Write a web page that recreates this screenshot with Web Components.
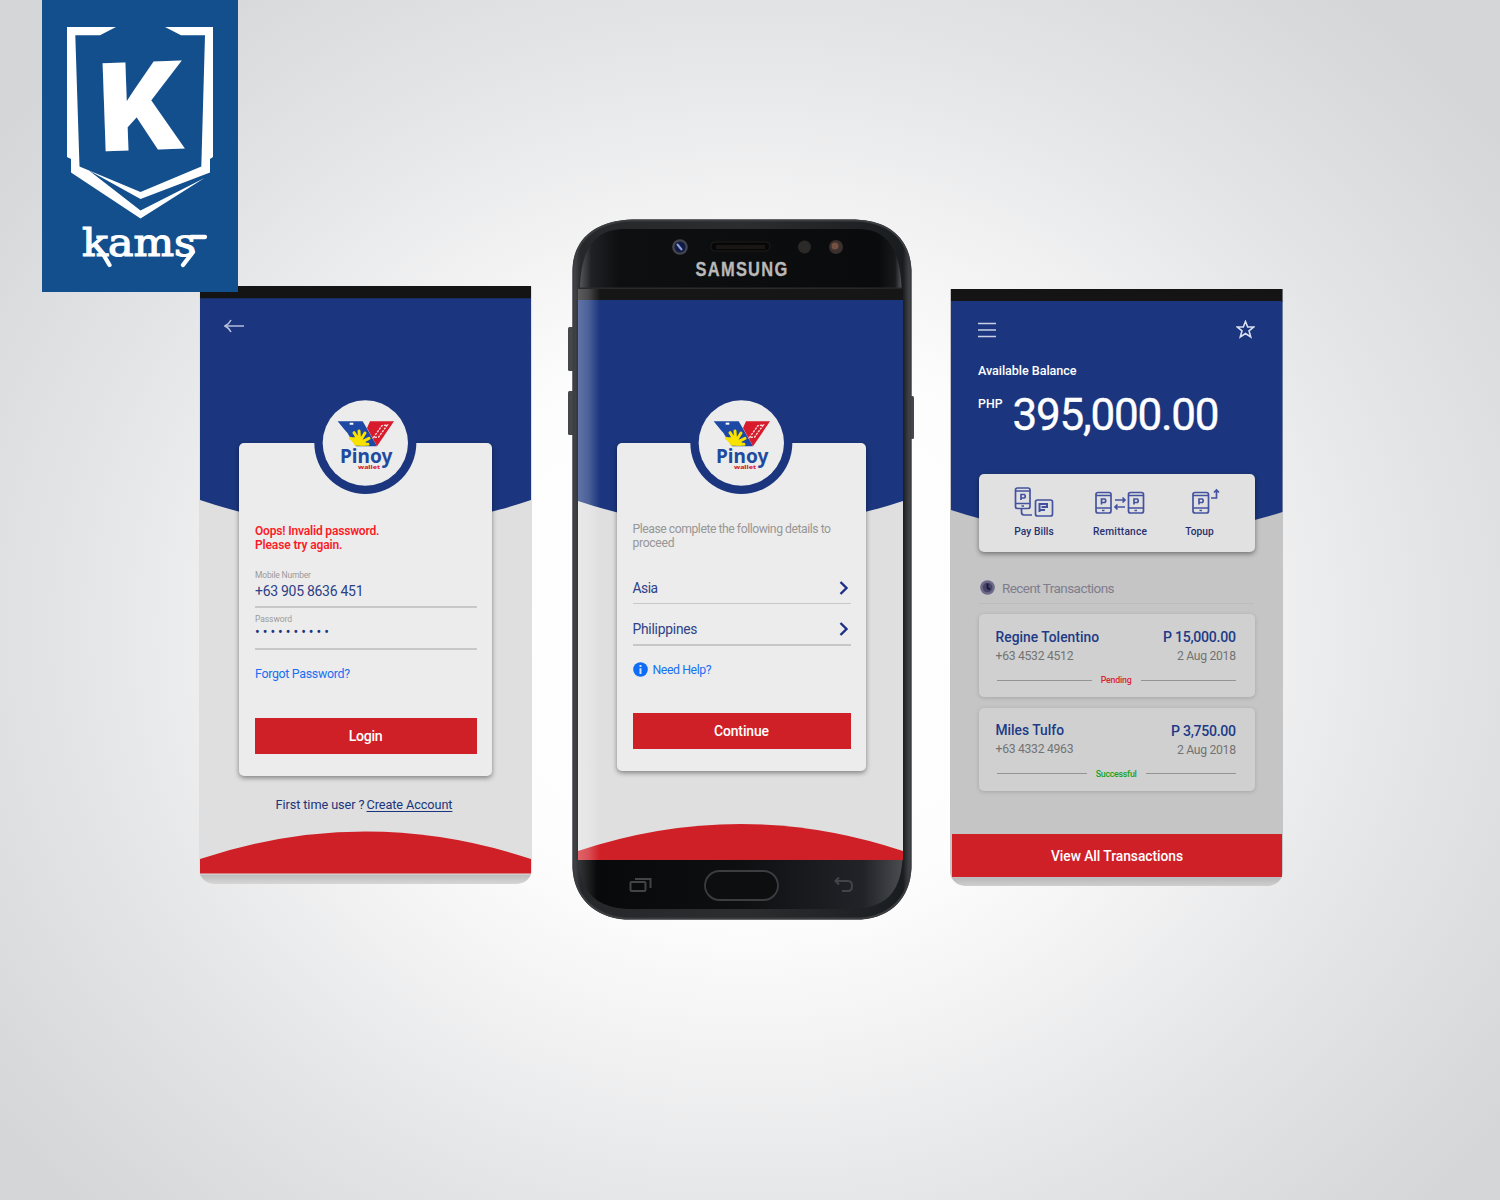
<!DOCTYPE html>
<html lang="en">
<head>
<meta charset="utf-8">
<title>Pinoy Wallet</title>
<style>
  html, body { margin: 0; padding: 0; }
  body { width: 1500px; height: 1200px; overflow: hidden; font-family: Roboto, "Liberation Sans", sans-serif; }
</style>
</head>
<body>
<wallet-showcase></wallet-showcase>
<script>
const define = (name, html, connected) => {
  const tpl = document.createElement('template');
  tpl.innerHTML = html;
  customElements.define(name, class extends HTMLElement {
    connectedCallback() {
      if (this.shadowRoot) return;
      this.attachShadow({ mode: 'open' }).append(tpl.content.cloneNode(true));
      if (connected) connected.call(this, this.shadowRoot);
    }
  });
};

/* One line of text: s = size, h = line height, t = space above, w = tracked width */
define('text-line', `
<style>
  :host { display: block; white-space: nowrap; flex: none; }
  span { display: inline-block; }
  :host([underline]) span { text-decoration: underline 1px; text-underline-offset: 1.500px; }
</style><span><slot></slot></span>`, function (root) {
  const a = n => parseFloat(this.getAttribute(n));
  this.style.fontSize = a('s') + 'px';
  this.style.lineHeight = a('h') + 'px';
  this.style.height = a('h') + 'px';
  if (a('t')) this.style.marginTop = a('t') + 'px';
  const w = a('w'), span = root.querySelector('span');
  if (w) {
    const gap = (w - span.getBoundingClientRect().width) / (this.textContent.length - 1);
    span.style.letterSpacing = gap + 'px';
    span.style.marginRight = -gap + 'px';
  }
});

define('kams-badge', `
<style>
  :host { display: block; width: 196px; height: 292px; background: #134f8d; }
  svg { display: block; }
</style>
<svg width="196" height="292" viewBox="42 0 196 292" fill="#fff">
  <path d="M67 27H116L100 35.300H75.300L79.500 166.500L140.500 192L201.300 166.500L205 35.300H181L165 27H213V157L210 159V172.500L140.500 199L89 170.500L140.500 210.500L204.500 178L140.500 218.500L71 172.500V159L67 157Z"/>
  <text x="97" y="150" font-family="Roboto" font-weight="900" font-size="124" textLength="85" lengthAdjust="spacingAndGlyphs" transform="rotate(-2 140 105)">K</text>
  <text x="82" y="256" font-family="DejaVu Serif" font-size="39" stroke="#fff" stroke-width="1.200" textLength="114" lengthAdjust="spacingAndGlyphs">kams</text>
  <path d="M103 254L109.500 265M191 237H205M193 252L183 265" stroke="#fff" stroke-width="4.300" stroke-linecap="round" fill="none"/>
</svg>`);

define('wallet-logo', `
<style>:host { display: block; height: 105px; } svg { display: block; }</style>
<svg width="110" height="105" viewBox="0 0 330 315">
  <circle cx="166" cy="144" r="153" fill="#1b367e"/>
  <circle cx="166" cy="144" r="128" fill="#ececec"/>
  <path d="M83 79H158L172 103L201 154H138L119 125Q114 114 105 106Z" fill="#1d48a4"/>
  <path d="M180 79H252L201 154L171 99Z" fill="#d71a2c"/>
  <path d="M190 128L216 92L232 90L206 126Z" fill="none" stroke="#f6dcdc" stroke-width="4" stroke-dasharray="7 3"/>
  <path d="M119 86H130" stroke="#fff" stroke-width="6"/>
  <path d="M118 128L138 126L168 140L166 152H136Z" fill="#f9e100"/>
  <path d="M148 138L132 113M149 138L147 108M150 138L165 114M152 142L177 130M152 147L174 148M148 142L121 130" stroke="#f9e100" stroke-width="9" stroke-linecap="round"/>
  <text x="90" y="205" font-family="Noto Sans" font-weight="700" font-size="58" fill="#214a9f" textLength="157" lengthAdjust="spacingAndGlyphs">Pinoy</text>
  <text x="144" y="221" font-family="Noto Sans" font-weight="800" font-size="17" fill="#d5202e" textLength="66" lengthAdjust="spacingAndGlyphs">wallet</text>
</svg>`);

define('app-card', `
<style>
  :host { display: flex; flex-direction: column; box-sizing: border-box; flex: none; background: #ececec; border-radius: 5px; box-shadow: 0 2px 5px rgba(0,0,0,.42); }
</style><slot></slot>`);

define('red-button', `
<style>
  :host { display: flex; align-items: center; justify-content: center; flex: none; background: #d02027; color: #fff; font-weight: 500; }
</style><slot></slot>`);

define('text-rule', `
<style>:host { display: block; flex: none; height: 1.500px; background: #c8c8c8; }</style>`);

define('login-screen', `
<style>
  :host { display: grid; width: 333px; height: 598px; background: linear-gradient(#dfdfdf 0 588px, #bdbdbd 589px, #d6d6d6 598px); border-radius: 0 0 15px 15px; overflow: hidden; }
  svg.bg, .col { grid-area: 1/1; }
  svg { display: block; }
  .col { display: flex; flex-direction: column; color: #1b357c; min-width: 0; }
  .back { margin: 33px 0 0 25px; }
  app-card { width: 253px; height: 333px; margin: 110px 0 0 40px; padding: 0 15px 0 16px; }
  wallet-logo { margin: -48px 0 0 54.500px; width: 110px; }
  .error { color: #fa1c28; font-weight: 600; }
  .label { color: #9a9a9a; }
  .number { color: #2d4186; }
  .link { color: #176ff2; }
  .foot { display: flex; margin: 19.500px 0 0 76.500px; gap: 2px; }
</style>
<svg class="bg" width="333" height="598" viewBox="-1 0 333 598">
  <rect width="331" height="13" fill="#141414"/>
  <path d="M0 12.300H331V214Q165.500 270 0 214Z" fill="#1b367e"/>
  <path d="M0 573Q165.500 518 331 573V587.500H0Z" fill="#d02027"/>
</svg>
<div class="col">
  <svg class="back" width="21" height="14" fill="none" stroke="#b4bfdc" stroke-width="1.600"><path d="M7 1Q5 5 1 7Q5 9 7 13M1 7H20"/></svg>
  <app-card>
    <wallet-logo></wallet-logo>
    <text-line class="error" s="12" h="14.500" t="23.700" w="124.500">Oops! Invalid password.</text-line>
    <text-line class="error" s="12" h="14.500" w="87.500">Please try again.</text-line>
    <text-line class="label" s="8.500" h="12" t="16.500" w="56">Mobile Number</text-line>
    <text-line class="number" s="14" h="18" t="1" w="108.500">+63 905 8636 451</text-line>
    <text-rule style="margin-top:6px"></text-rule>
    <text-line class="label" s="8.500" h="12" t="5" w="37">Password</text-line>
    <text-line s="14" h="12" t="1.500" w="74">••••••••••</text-line>
    <text-rule style="margin-top:10px"></text-rule>
    <text-line class="link" s="12.400" h="16" t="16.500" w="95">Forgot Password?</text-line>
    <red-button style="height:36px;margin-top:36px;margin-left:-.5px"><text-line s="14.200" h="18" w="34">Login</text-line></red-button>
  </app-card>
  <div class="foot"><text-line s="12.700" h="17" w="89">First time user ?</text-line><text-line underline s="12.700" h="17" w="86">Create Account</text-line></div>
</div>`);

define('picker-row', `
<style>
  :host { display: flex; flex: none; align-items: center; justify-content: space-between; height: 18px; color: #2d4186; }
  svg { display: block; margin-right: 2px; }
</style><slot></slot>
<svg width="10" height="14" fill="none" stroke="#1c2f86" stroke-width="2.400"><path d="M1.500 1L7.500 7L1.500 13"/></svg>`);

define('region-screen', `
<style>
  :host { display: grid; width: 325px; height: 571px; background: #dfdfdf; overflow: hidden; }
  svg.bg, .col, .glare { grid-area: 1/1; }
  svg { display: block; }
  .glare { z-index: 1; background: linear-gradient(90deg, rgba(255,255,255,.3), rgba(255,255,255,.22) 10px, rgba(255,255,255,0) 22px); }
  .col { display: flex; flex-direction: column; }
  app-card { width: 249px; height: 328px; margin: 154px 0 0 39px; padding: 0 15px 0 16px; }
  wallet-logo { margin: -48px 0 0 53px; width: 110px; }
  .hint { color: #979797; }
  .help { display: flex; align-items: center; gap: 5px; margin-top: 16px; color: #1a70f2; }
</style>
<svg class="bg" width="325" height="571">
  <rect width="325" height="12" fill="#161616"/>
  <path d="M0 11H325V212Q162.500 266 0 212Z" fill="#1b367e"/>
  <path d="M0 562Q162.500 508 325 562V571H0Z" fill="#d02027"/>
</svg>
<div class="col">
  <app-card>
    <wallet-logo></wallet-logo>
    <text-line class="hint" s="12.200" h="14" t="22" w="198.500">Please complete the following details to</text-line>
    <text-line class="hint" s="12.200" h="14" w="42">proceed</text-line>
    <picker-row style="margin-top:29px"><text-line s="13.800" h="18" w="25.500">Asia</text-line></picker-row>
    <text-rule style="margin-top:5.500px"></text-rule>
    <picker-row style="margin-top:15.500px"><text-line s="13.800" h="18" w="65">Philippines</text-line></picker-row>
    <text-rule style="margin-top:6.500px"></text-rule>
    <div class="help">
      <svg width="15" height="15"><circle cx="7.500" cy="7.500" r="7.300" fill="#0f6df5"/><path d="M7.500 3V4.900M7.500 6.200V12" stroke="#cfe0fb" stroke-width="2"/></svg>
      <text-line s="12.300" h="16" w="59">Need Help?</text-line>
    </div>
    <red-button style="height:35.500px;margin-top:35.500px"><text-line s="13.900" h="18" w="55">Continue</text-line></red-button>
  </app-card>
</div>
<div class="glare"></div>`);

define('galaxy-phone', `
<style>
  :host { display: grid; width: 346px; height: 702px; }
  svg, .view { grid-area: 1/1; }
  svg { display: block; }
  .view { margin: 70px 0 0 9.500px; }
</style>
<svg width="346" height="702" viewBox="568 219 346 702">
  <defs>
    <linearGradient id="rim" x2="1" y2="0"><stop offset="0" stop-color="#4b4d52"/><stop offset=".025" stop-color="#26272a"/><stop offset=".5" stop-color="#2c2d2f"/><stop offset=".975" stop-color="#1a1d20"/><stop offset="1" stop-color="#505257"/></linearGradient>
    <linearGradient id="face" x2="1" y2="0"><stop offset="0" stop-color="#55565a"/><stop offset=".035" stop-color="#202124"/><stop offset=".12" stop-color="#0e0f11"/><stop offset=".93" stop-color="#0a0b0c"/><stop offset=".98" stop-color="#18191b"/><stop offset="1" stop-color="#55565a"/></linearGradient>
    <linearGradient id="chin" x2="1" y2="0"><stop offset="0" stop-color="#36373a"/><stop offset=".06" stop-color="#08090a"/><stop offset=".5" stop-color="#0e0f11"/><stop offset=".88" stop-color="#222328"/><stop offset="1" stop-color="#4b4c50"/></linearGradient>
  </defs>
  <g fill="#45474d"><rect x="568" y="327" width="7" height="44" rx="1.500"/><rect x="568" y="391" width="7" height="44" rx="1.500"/><rect x="908" y="396" width="6" height="43" rx="1.500"/></g>
  <path d="M572.500 270C573 238 596 221 632 219.500H855C891 221 910 240 911.500 270V868C910 898 892 917 861 919.500H625C594 917 574 898 572.500 868Z" fill="url(#rim)"/>
  <path d="M573.500 270C574 239 597 221.500 632 220.500H855C890 221.500 909 240 910.500 270V868C909 897 891 916 861 918.500H625C595 916 575 897 573.500 868Z" fill="none" stroke="#3b3d41" stroke-width="2"/>
  <path d="M580 288C581 250 594 230 622 229H860C888 230 900 250 901.500 288Z" fill="url(#face)"/>
  <path d="M580 288H902" stroke="#2b2c2e"/>
  <path d="M578 859.500H902.500C900 893 886 908 852 909H630C596 908 581 893 578 859.500Z" fill="url(#chin)"/>
  <circle cx="680" cy="247" r="7.800" fill="#44464d"/><circle cx="680" cy="247" r="5.500" fill="#121a46"/><path d="M677 244L682 250" stroke="#8f9fd8" stroke-width="2"/>
  <rect x="711" y="242" width="59" height="9" rx="4" fill="#070707" stroke="#1d1d1d"/><path d="M716 247H765" stroke="#191614" stroke-width="4"/>
  <circle cx="804.500" cy="247" r="6.500" fill="#2b2a29"/><circle cx="836" cy="247" r="7" fill="#3a302d"/><circle cx="835" cy="246" r="3.500" fill="#765040"/>
  <text x="695.500" y="276" font-family="Liberation Sans" font-weight="700" font-size="19.500" fill="#b9b9b9" stroke="#b9b9b9" stroke-width=".3" letter-spacing="1.500" textLength="93" lengthAdjust="spacingAndGlyphs">SAMSUNG</text>
  <rect x="705" y="871" width="73" height="29" rx="14.500" fill="#0d0e10" stroke="#3c3d40" stroke-width="1.800"/>
  <g fill="none" stroke="#434447" stroke-width="2"><rect x="630.500" y="882" width="15" height="9" rx="1"/><path d="M635 879H650.500V888"/><path d="M836 881H848Q852 881 852 886T848 891H842M839 877.500L835.500 881L839 884.500"/></g>
</svg>
<div class="view"><slot></slot></div>`);

define('quick-action', `
<style>
  :host { display: flex; flex-direction: column; align-items: center; color: #27306f; font-weight: 500; }
</style><slot name="icon"></slot><slot></slot>`);

define('transaction-card', `
<style>
  :host { display: flex; flex-direction: column; box-sizing: border-box; flex: none; width: 275.500px; height: 83px; padding: 13.500px 18.500px 0 16.500px; border-radius: 5px; background: #d0d0d0; box-shadow: 0 1px 4px rgba(0,0,0,.16); }
  .row { display: flex; justify-content: space-between; }
  .top { color: #203a86; font-weight: 500; }
  .sub { color: #737373; margin-top: 2.500px; }
  .state { display: flex; align-items: center; gap: 9px; margin-top: 10px; padding-left: 1px; font-weight: 500; }
  .state i { height: 1px; background: #949494; flex: 1; }
</style>
<div class="row top"><slot name="name"></slot><slot name="amount"></slot></div>
<div class="row sub"><slot name="phone"></slot><slot name="date"></slot></div>
<div class="state"><i></i><slot name="state"></slot><i></i></div>`);

define('home-screen', `
<style>
  :host { display: grid; width: 333px; height: 597.500px; border-radius: 0 0 15px 15px; overflow: hidden; background: linear-gradient(#c5c5c5 0 588px, #b9b9b9 589px, #cfcfcf 597px); }
  svg.bg, .col { grid-area: 1/1; }
  svg { display: block; }
  .col { display: flex; flex-direction: column; }
  .bar { display: flex; justify-content: space-between; margin: 31px 28.500px 0 28px; height: 20px; align-items: center; }
  .balance { color: #fff; margin-left: 28px; }
  .sum { display: flex; align-items: flex-start; gap: 10px; margin-top: 11px; }
  .actions { display: flex; flex-direction: row; width: 275.500px; height: 78px; margin: 34px 0 0 29px; background: #e1e1e1; padding: 11px 0 0 30px; }
  .recent { display: flex; align-items: center; gap: 7px; margin: 27px 0 0 30px; color: #807d8d; }
  .line { height: 1px; background: #bcbcbc; margin: 6px 29px 0; }
  transaction-card { margin-left: 29px; }
  [slot=state] { font-weight: 500; }
  red-button { height: 43px; margin: 43.500px 1px 0 2px; }
</style>
<svg class="bg" width="333" height="598" viewBox="-1 0 333 598">
  <rect width="331.500" height="13" fill="#141414"/>
  <path d="M0 12H331.500V223Q165 275 0 221Z" fill="#1b367e"/>
</svg>
<div class="col">
  <div class="bar">
    <svg width="18" height="16" stroke="#c9d0e5" stroke-width="1.700"><path d="M0 1.500H18M0 8H18M0 14.500H18"/></svg>
    <svg width="19" height="19" viewBox="0 0 19 19" fill="none" stroke="#d9dfee" stroke-width="1.600"><path d="M9.500 1.500L11.700 7H17.600L13 10.800L14.700 17L9.500 13.500L4.300 17L6 10.800L1.400 7H7.300Z"/></svg>
  </div>
  <div class="balance">
    <text-line style="font-weight:500" s="12.600" h="16" t="23" w="98.500">Available Balance</text-line>
    <div class="sum"><text-line style="font-weight:500" s="12.300" h="14" t="7" w="24.500">PHP</text-line><text-line style="-webkit-text-stroke:.4px #fff" s="44" h="50" w="207">395,000.00</text-line></div>
  </div>
  <app-card class="actions">
    <quick-action style="width:50px">
      <svg slot="icon" width="40" height="39" viewBox="0 0 40 39" fill="none" stroke="#4453a0" stroke-width="1.700"><rect x="1.500" y="3" width="14.500" height="20.500" rx="2"/><path d="M1.500 6H16M1.500 18.500H16M7.500 21H10M7 15V9.500H10.500Q12 11.200 10.500 13H7M7.500 24V27Q7.500 30 10 30H18"/><rect x="21.500" y="15" width="17" height="16" rx="2"/><path d="M25.500 27V19H33V22H27.500M25.500 25H31" stroke-width="2"/></svg>
      <text-line s="10.200" h="14" t="1" w="39.500">Pay Bills</text-line>
    </quick-action>
    <quick-action style="width:60px;margin-left:31px">
      <svg slot="icon" width="50" height="39" viewBox="0 0 50 39" fill="none" stroke="#4453a0" stroke-width="1.700"><rect x="1" y="7.500" width="15" height="20.500" rx="2"/><path d="M1 10.500H16M1 23H16M7 25.500H9.500M6.500 19.500V14H10Q11.500 15.700 10 17.500H6.500"/><rect x="33.500" y="7.500" width="15" height="20.500" rx="2"/><path d="M33.500 10.500H48.500M33.500 23H48.500M39.500 25.500H42M39 19.500V14H42.500Q44 15.700 42.500 17.500H39M20 15H30M27.500 12.500L30 15L27.500 17.500M30 22H20M22.500 19.500L20 22L22.500 24.500"/></svg>
      <text-line s="10.200" h="14" t="1" w="54">Remittance</text-line>
    </quick-action>
    <quick-action style="width:40px;margin-left:29.500px">
      <svg slot="icon" width="40" height="39" viewBox="0 0 40 39" fill="none" stroke="#4453a0" stroke-width="1.700" style="margin-left:13px"><rect x="7" y="7.500" width="15.500" height="20.500" rx="2"/><path d="M7 10.500H22.500M7 23H22.500M13.500 25.500H16M13 19.500V14H16.500Q18 15.700 16.500 17.500H13M25 13H30.500V5M28 7.500L30.500 5L33 7.500"/></svg>
      <text-line s="10.200" h="14" t="1" w="28.500">Topup</text-line>
    </quick-action>
  </app-card>
  <div class="recent">
    <svg width="15" height="15"><circle cx="7.500" cy="7.500" r="7.300" fill="#6d6987"/><circle cx="7.500" cy="7.500" r="4.800" fill="#47446a"/><path d="M7.500 3.500V8L10 9.500" fill="none" stroke="#17152f" stroke-width="1.800"/></svg>
    <text-line s="13.500" h="18" w="112.500">Recent Transactions</text-line>
  </div>
  <div class="line"></div>
  <transaction-card style="margin-top:10.500px">
    <text-line slot="name" s="13.800" h="18" w="103.500">Regine Tolentino</text-line><text-line slot="amount" s="14.100" h="18" t=".5" w="73">P 15,000.00</text-line>
    <text-line slot="phone" s="12.200" h="15" w="78">+63 4532 4512</text-line><text-line slot="date" s="12.200" h="15" t=".5" w="59">2 Aug 2018</text-line>
    <text-line slot="state" style="color:#dc2432" s="8.800" h="12" w="31">Pending</text-line>
  </transaction-card>
  <transaction-card style="margin-top:10.500px">
    <text-line slot="name" s="13.800" h="18" w="68.500">Miles Tulfo</text-line><text-line slot="amount" s="14.100" h="18" t=".5" w="65">P 3,750.00</text-line>
    <text-line slot="phone" s="12.200" h="15" w="78">+63 4332 4963</text-line><text-line slot="date" s="12.200" h="15" t=".5" w="59">2 Aug 2018</text-line>
    <text-line slot="state" style="color:#16a320" s="8.800" h="12" w="41">Successful</text-line>
  </transaction-card>
  <red-button><text-line s="13.800" h="18" w="132">View All Transactions</text-line></red-button>
</div>`);

define('wallet-showcase', `
<style>
  :host { display: block; position: relative; width: 1500px; height: 1200px; background: radial-gradient(ellipse 940px 830px at 750px 630px, #fff 0, #fdfdfd 34%, #f3f3f4 50%, #e4e5e6 72%, #d9dadc 92%, #d5d6d8 100%); }
  kams-badge { position: absolute; left: 42px; top: 0; z-index: 1; }
  .phones { display: flex; align-items: flex-start; padding: 219px 0 0 199px; }
  login-screen { margin-top: 67px; }
  galaxy-phone { margin-left: 36px; }
  home-screen { margin: 69.500px 0 0 36px; }
</style>
<kams-badge></kams-badge>
<div class="phones">
  <login-screen></login-screen>
  <galaxy-phone><region-screen></region-screen></galaxy-phone>
  <home-screen></home-screen>
</div>`);
</script>
</body>
</html>
